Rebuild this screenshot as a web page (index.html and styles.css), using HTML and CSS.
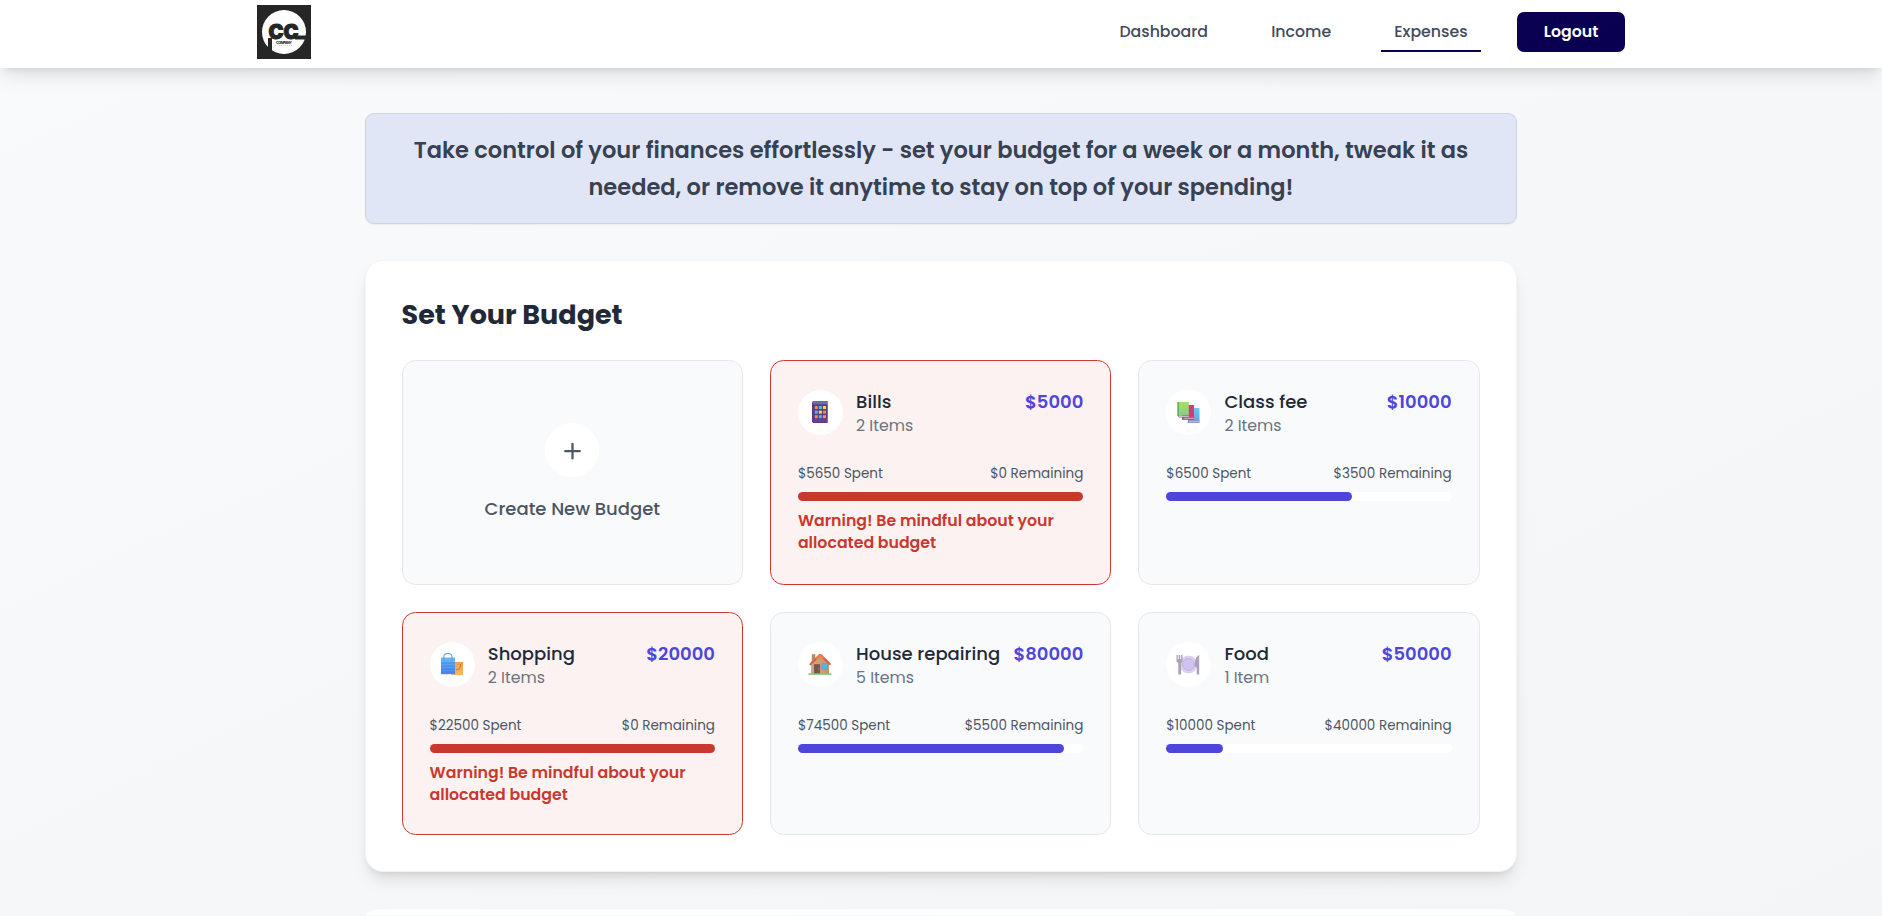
FILE: index.html
```html
<!DOCTYPE html>
<html lang="en">
<head>
<meta charset="utf-8">
<title>Expenses</title>
<link rel="stylesheet" href="styles.css">
</head>
<body>
<header class="header">
  <div class="header-inner">
    <svg class="logo" viewBox="0 0 54 54" role="img" aria-label="CC Company">
      <rect width="54" height="54" fill="#262626"/>
      <circle cx="27" cy="27" r="22" fill="#fff"/>
      <path d="M11 33h4v16l-4-3z" fill="#262626"/>
      <path d="M38 30.500h16v4H38z" fill="#262626"/>
      <text class="logo-cc" x="11.500" y="34" textLength="30" lengthAdjust="spacingAndGlyphs">CC</text>
      <text class="logo-name" x="19" y="38.800" textLength="16">COMPANY</text>
      <path d="M18 40.300h18" stroke="#bbb" stroke-width=".7" stroke-dasharray="1 1"/>
    </svg>
    <nav class="nav">
      <a class="nav-link">Dashboard</a>
      <a class="nav-link">Income</a>
      <a class="nav-link active">Expenses</a>
      <button class="logout">Logout</button>
    </nav>
  </div>
</header>

<main class="main">
  <p class="banner">Take control of your finances effortlessly - set your budget for a week or a month, tweak it as needed, or remove it anytime to stay on top of your spending!</p>

  <section class="panel">
    <h2 class="panel-title">Set Your Budget</h2>
    <div class="grid">
      <div class="card create">
        <span class="plus">
          <svg width="27" height="27" viewBox="0 0 24 24" fill="none" stroke="#4b5563" stroke-width="2" stroke-linecap="round"><path d="M12 6v13M5.500 12.500h13"/></svg>
        </span>
        <span class="create-label">Create New Budget</span>
      </div>

      <div class="card over">
        <div class="head">
          <span class="icon">
            <svg width="24" height="24" viewBox="0 0 24 24">
              <path d="M4 2.500 5.200 1h14.300v22H5.200L4 21.500z" fill="#4b3b86"/>
              <rect x="5" y="1" width="14.500" height="3.600" fill="#6b6cb4"/>
              <rect x="5" y="4.600" width="14.500" height="14" fill="#563f80"/>
              <rect x="5" y="18.800" width="14.500" height="3.600" fill="#673f94"/>
              <g fill="#f08a4b"><rect x="6.800" y="6" width="3" height="3"/><rect x="15" y="10.600" width="3" height="3"/><rect x="6.800" y="15.200" width="3" height="3"/></g>
              <g fill="#52b4f2"><rect x="10.900" y="6" width="3" height="3"/><rect x="6.800" y="10.600" width="3" height="3"/><rect x="10.900" y="15.200" width="3" height="3"/></g>
              <g fill="#ffd84f"><rect x="15" y="6" width="3" height="3"/><rect x="10.900" y="10.600" width="3" height="3"/></g>
              <rect x="15" y="15.200" width="3" height="3" fill="#f09a4b"/>
            </svg>
          </span>
          <div class="info"><h3 class="name">Bills</h3><p class="items">2 Items</p></div>
          <strong class="amount">$5000</strong>
        </div>
        <div class="stats"><span>$5650 Spent</span><span>$0 Remaining</span></div>
        <div class="track"><div class="fill" style="width:100%"></div></div>
        <p class="warning">Warning! Be mindful about your allocated budget</p>
      </div>

      <div class="card">
        <div class="head">
          <span class="icon">
            <svg width="24" height="24" viewBox="0 0 24 24">
              <defs>
                <linearGradient id="green" x2="0" y2="1"><stop stop-color="#a9de64"/><stop offset="1" stop-color="#86cf88"/></linearGradient>
                <linearGradient id="blue" x2="0" y2="1"><stop stop-color="#72c8ef"/><stop offset="1" stop-color="#58a3ea"/></linearGradient>
              </defs>
              <path d="M12 8h11.500v14.300H12z" fill="url(#blue)"/>
              <path d="M12 20.200h11.500v2.600H11.500z" fill="#8180c8"/><path d="M13 20.800h10.500v.8H13z" fill="#d6d7f1"/>
              <path d="M6 5h12v13.500H6z" fill="#d33f6a"/>
              <path d="M6 17h12.400v2.800H6z" fill="#b83d70"/><path d="M7.500 17.800h10.900v.8H7.500z" fill="#eed7e8"/>
              <path d="M1.500 2h11.300v13.500H1.500z" fill="url(#green)"/>
              <path d="M1.500 2h1.300v14H1.500z" fill="#51a65c"/>
              <path d="M1.500 15.500h11.300v2H3z" fill="#6d7b91"/><path d="M3 15.900h9.800v.8H3z" fill="#dde8ef"/>
            </svg>
          </span>
          <div class="info"><h3 class="name">Class fee</h3><p class="items">2 Items</p></div>
          <strong class="amount">$10000</strong>
        </div>
        <div class="stats"><span>$6500 Spent</span><span>$3500 Remaining</span></div>
        <div class="track"><div class="fill" style="width:65%"></div></div>
      </div>

      <div class="card over">
        <div class="head">
          <span class="icon">
            <svg width="24" height="24" viewBox="0 0 24 24">
              <defs>
                <linearGradient id="bag" x2="0" y2="1"><stop stop-color="#68bdf5"/><stop offset="1" stop-color="#4a85ee"/></linearGradient>
                <linearGradient id="bag-small" x2="0" y2="1"><stop stop-color="#eea048"/><stop offset="1" stop-color="#f7b95e"/></linearGradient>
              </defs>
              <path d="M11.500 10h11.500v13H11.500z" fill="url(#bag-small)"/>
              <path d="M16 17.800c3.500 0 4.800-2.300 4.500-5.600" fill="none" stroke="#c56b33"/>
              <path d="M1 5.500h14v16.700H1z" fill="url(#bag)"/>
              <path d="M1 11h14M1 14h14M1 17h14M1 20h14" stroke="#477bdc" stroke-width=".8"/>
              <path d="M3.800 8.500V4.800C3.800.3 12 .3 12 4.800v3.700" fill="none" stroke="#5c9ed2" stroke-width="1.100"/>
            </svg>
          </span>
          <div class="info"><h3 class="name">Shopping</h3><p class="items">2 Items</p></div>
          <strong class="amount">$20000</strong>
        </div>
        <div class="stats"><span>$22500 Spent</span><span>$0 Remaining</span></div>
        <div class="track"><div class="fill" style="width:100%"></div></div>
        <p class="warning">Warning! Be mindful about your allocated budget</p>
      </div>

      <div class="card">
        <div class="head">
          <span class="icon">
            <svg width="24" height="24" viewBox="0 0 24 24">
              <defs><linearGradient id="wall"><stop stop-color="#d7a77b"/><stop offset="1" stop-color="#c89565"/></linearGradient></defs>
              <path d="M3.800 2.200h3.500v8H3.800z" fill="#b98a64"/>
              <path d="M12 3 3 12v9.700h18V12z" fill="url(#wall)"/>
              <path d="M1 12.200 11 2.300h2.500L23.200 12l-1.400 1.200-9.600-8.800-9.600 9z" fill="#dc5b4d"/>
              <path d="m11 2.300h2.500l3.200 3.200-2 1.200-2.500-2.300-3.300 3-1.500-1.600z" fill="#ef7e4f"/>
              <path d="M6 12.200h6v9.500H6z" fill="#785357"/><circle cx="10.700" cy="17" r=".6" fill="#d9a765"/>
              <path d="M14 11.700h5.500v5.500H14z" fill="#58b3f2" stroke="#7b8aa5" stroke-width=".5"/>
              <path d="M.5 21.300h23v1.500H.5z" fill="#68c96b"/>
            </svg>
          </span>
          <div class="info"><h3 class="name">House repairing</h3><p class="items">5 Items</p></div>
          <strong class="amount">$80000</strong>
        </div>
        <div class="stats"><span>$74500 Spent</span><span>$5500 Remaining</span></div>
        <div class="track"><div class="fill" style="width:93.125%"></div></div>
      </div>

      <div class="card">
        <div class="head">
          <span class="icon">
            <svg width="24" height="24" viewBox="0 0 24 24">
              <circle cx="12.500" cy="12.500" r="9" fill="#dbd1ef"/>
              <circle cx="12.500" cy="12.500" r="6" fill="#d0c3f0" stroke="#bcaedc" stroke-width=".8"/>
              <path d="M.5 3h1.300v4h.9V3h1.500v4h.9V3h1.400v6.500L5 11v11.500H2.300V11L.5 9.500z" fill="#aca1b6"/>
              <path d="M23.200 3v19.500h-2.500V15h-2c0-6 .8-10.500 4.500-12z" fill="#aca1b6"/>
            </svg>
          </span>
          <div class="info"><h3 class="name">Food</h3><p class="items">1 Item</p></div>
          <strong class="amount">$50000</strong>
        </div>
        <div class="stats"><span>$10000 Spent</span><span>$40000 Remaining</span></div>
        <div class="track"><div class="fill" style="width:20%"></div></div>
      </div>
    </div>
  </section>

  <section class="panel next"></section>
</main>
</body>
</html>
```
FILE: styles.css
```css
* { box-sizing: border-box; margin: 0; }

body {
  height: 916px;
  overflow: hidden;
  font-family: Poppins, Inter, sans-serif;
  font-size: 18px;
  line-height: 27px;
  color: #1f2937;
  background: linear-gradient(to bottom right, #f9fafb, #f4f5f7);
}

.header {
  position: relative;
  height: 68px;
  background: #fff;
  box-shadow: 0 11px 17px -3px rgba(0, 0, 0, .1), 0 4.5px 7px -4px rgba(0, 0, 0, .1);
}
.header-inner {
  width: 1368px;
  height: 64px;
  margin: 0 auto;
  display: flex;
  align-items: center;
  justify-content: space-between;
}
.logo { width: 54px; height: 54px; }
.logo-cc { font: 900 20px Inter, sans-serif; fill: #262626; stroke: #262626; stroke-width: 1px; }
.logo-name { font: 800 3.6px Inter, sans-serif; fill: #333; }

.nav { display: flex; align-items: center; gap: 35.6px; }
.nav-link {
  height: 40px;
  padding: 0 13.8px;
  text-align: center;
  font-size: 15.75px;
  font-weight: 500;
  line-height: 40px;
  color: #414b5a;
}
.nav-link.active { border-bottom: 2px solid #0a0052; }
.logout {
  width: 108px;
  height: 40px;
  padding: 0 0 2px;
  border: 0;
  border-radius: 7px;
  font: 600 15.75px Poppins, Inter, sans-serif;
  color: #fff;
  background: #0a0052;
}

.main { width: 1152px; margin: 45px auto 0; }

.banner {
  padding: 18px 36px;
  text-align: center;
  font-size: 22.5px;
  font-weight: 600;
  line-height: 36.56px;
  color: #374151;
  background: #e1e6f6;
  border: 1px solid #d1d5db;
  border-radius: 9px;
  box-shadow: 0 1px 2px rgba(0, 0, 0, .06);
}

.panel {
  margin-top: 36px;
  padding: 36px 36.4px 36px 35.6px;
  background: #fff;
  border: 1px solid #f3f4f6;
  border-radius: 18px;
  box-shadow: 0 11px 17px -3px rgba(0, 0, 0, .1), 0 4.5px 7px -4px rgba(0, 0, 0, .1);
}
/* Only the top edge of the next section shows above the fold. */
.panel.next {
  height: 7px;
  padding: 0;
  border-bottom: 0;
  border-radius: 18px 18px 0 0 / 7px 7px 0 0;
  box-shadow: none;
}
.panel-title {
  margin-bottom: 28px;
  font-size: 27px;
  font-weight: 700;
  line-height: 35px;
}

.grid {
  display: grid;
  grid-template-columns: repeat(3, 1fr);
  grid-template-rows: 225px 223px;
  gap: 27px;
}
.card {
  padding: 27px;
  background: #f9fafb;
  border: 1px solid #e5e7eb;
  border-radius: 13.5px;
}
.card.over { background: #fcf2f1; border-color: #cb3a31; }

.create {
  display: flex;
  flex-direction: column;
  align-items: center;
  justify-content: center;
  gap: 18px;
}
.plus, .icon {
  display: flex;
  flex: none;
  align-items: center;
  justify-content: center;
  background: #fff;
  border-radius: 50%;
}
.plus { width: 54px; height: 54px; }
.create-label { font-weight: 500; color: #4b5563; }

.head { display: flex; height: 49px; }
.icon { width: 45px; height: 45px; margin: 2px 13.2px 0 0; }
.icon svg { margin: 0 1px 2px 0; }
.info { flex: 1; white-space: nowrap; }
.name { font-size: 18px; font-weight: 500; }
.items { font-size: 15.75px; line-height: 22px; color: #6b7280; }
.amount { font-weight: 600; color: #4e45dc; }

.stats {
  display: flex;
  justify-content: space-between;
  margin: 28px 0 9px;
  font-size: 13.5px;
  line-height: 18px;
  color: #4b5563;
}
.track { height: 9px; border-radius: 9px; background: #fff; }
.fill { height: 9px; border-radius: 9px; background: #4e45dc; }
.over .fill { background: #c9382f; }

.warning {
  margin-top: 8.6px;
  font-size: 15.75px;
  font-weight: 600;
  line-height: 22.2px;
  color: #c9382f;
}
```
